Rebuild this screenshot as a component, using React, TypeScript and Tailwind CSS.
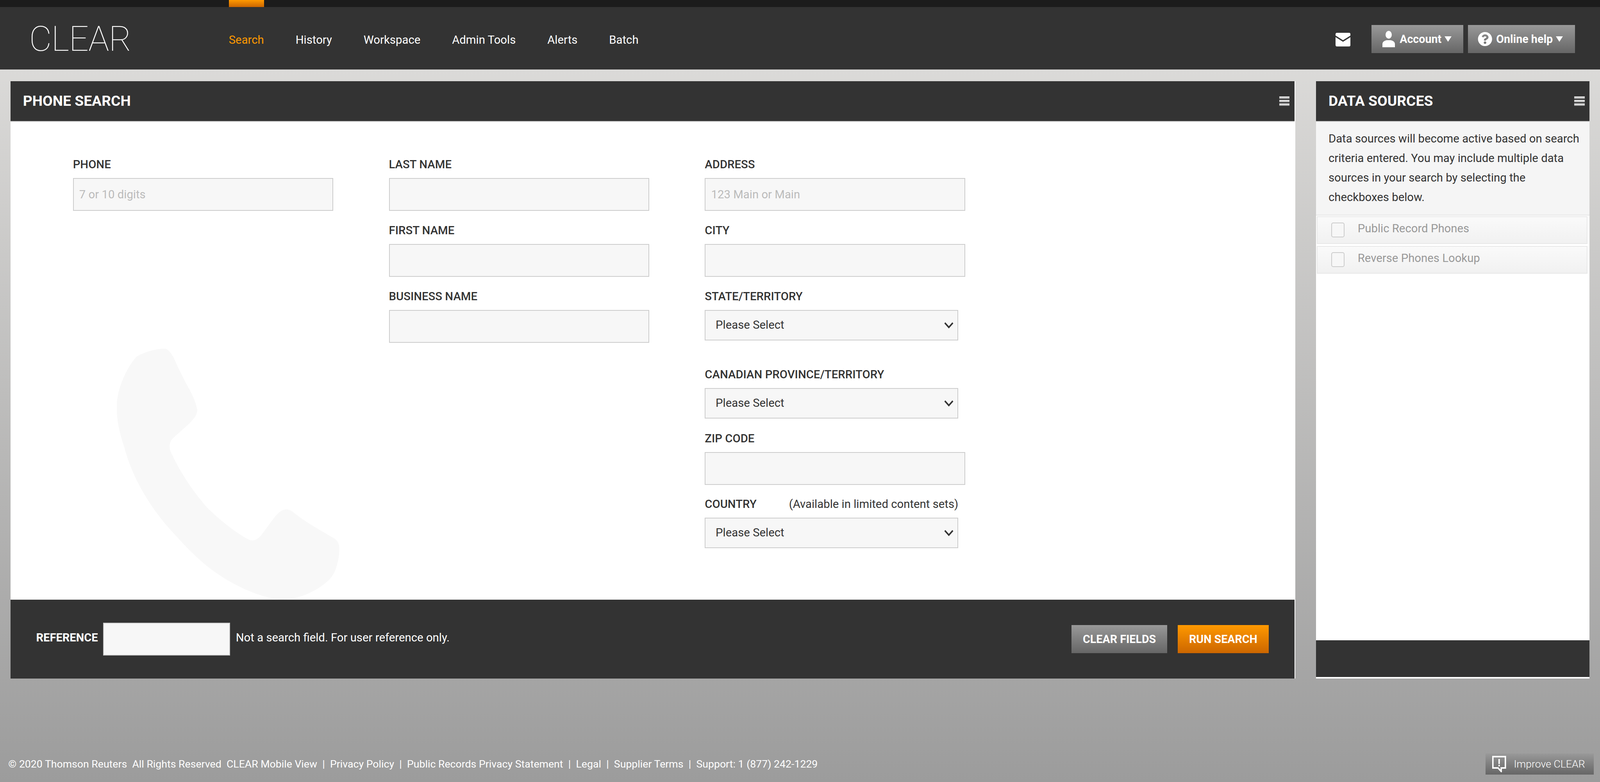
import { FaQuestionCircle } from "react-icons/fa";

// horizontal sizes are in vw so the page keeps its proportions at any window width
// (1vw = 46.08px at the 4608 design width), vertical sizes stay in px
const NAV = ["History", "Workspace", "Admin Tools", "Alerts", "Batch"];

function Hamburger() {
  return (
    <div className="flex w-[0.651vw] flex-col gap-[3px]">
      <span className="h-[6px] bg-linear-to-b from-white to-[#999]" />
      <span className="h-[6px] bg-linear-to-b from-white to-[#999]" />
      <span className="h-[6px] bg-linear-to-b from-white to-[#999]" />
    </div>
  );
}

function Caret() {
  return <span className="block h-0 w-0 border-x-[0.239vw] border-t-[14px] border-x-transparent border-t-white" />;
}

function TextField({ label, placeholder, className = "" }: { label: string; placeholder?: string; className?: string }) {
  return (
    <div className={className}>
      <label className="flex h-[68px] items-center text-[0.716vw] font-medium text-[#333]">{label}</label>
      <input
        placeholder={placeholder}
        className="block h-[84px] w-[16.276vw] border-2 border-[#ccc] bg-[#f7f7f7] px-[0.347vw] text-[0.716vw] outline-none placeholder:text-[#bbb]"
      />
    </div>
  );
}

function SelectField({ label, note, className = "" }: { label: string; note?: string; className?: string }) {
  return (
    <div className={className}>
      <label className="flex h-[68px] w-[15.842vw] items-center justify-between text-[0.716vw] font-medium text-[#333]">
        {label}
        {note && <span className="font-normal">{note}</span>}
      </label>
      <div className="relative h-[78px] w-[15.842vw]">
        <select className="block h-full w-full appearance-none border-2 border-[#ccc] bg-[#f7f7f7] pl-[0.629vw] text-[0.716vw] text-[#333] outline-none">
          <option>Please Select</option>
        </select>
        <svg viewBox="0 0 27 16" preserveAspectRatio="none" className="pointer-events-none absolute right-[0.304vw] top-[31px] h-[16px] w-[0.586vw]">
          <path d="M2 2l11.5 11.5L25 2" fill="none" stroke="#333" strokeWidth="4" />
        </svg>
      </div>
    </div>
  );
}

function SourceRow({ label }: { label: string }) {
  return (
    <label className="flex h-[71px] items-start border-2 border-[#e8e8e8] bg-linear-to-b from-[#fafafa] to-[#f1f1f1] pl-[0.868vw] text-[0.716vw] text-[#999]">
      <span className="mt-[14px] h-[38px] w-[0.825vw] rounded-[5px] border-2 border-[#ccc] bg-[#f7f7f7]" />
      <span className="ml-[0.825vw] mt-[8px] leading-[42px]">{label}</span>
    </label>
  );
}

export default function App() {
  return (
    <div className="flex min-h-[2003px] flex-col bg-linear-to-b from-[#e1e0de] to-[#9c9c9c] font-['Roboto',sans-serif]">
      <div className="h-[18px] bg-[#1c1c1c]">
        <div className="ml-[14.3vw] h-full w-[2.214vw] bg-linear-to-b from-[#f90] to-[#c60]" />
      </div>

      <header className="flex h-[160px] items-center bg-[#333] pr-[1.5625vw]">
        <div className="mt-[4px] w-[14.3vw] pl-[1.823vw] text-[2.17vw] font-thin leading-none tracking-[-0.02vw] text-white">CLEAR</div>
        <nav className="flex gap-[1.975vw] pt-[10px] text-[0.716vw] text-white">
          <a className="text-[#f90]">Search</a>
          {NAV.map((item) => (
            <a key={item}>{item}</a>
          ))}
        </nav>
        <svg viewBox="0 0 43 35" preserveAspectRatio="none" className="ml-auto mr-[1.324vw] mt-[7px] h-[35px] w-[0.933vw]">
          <path d="M4 0h35a4 4 0 0 1 4 4v3L21.500 19 0 7V4a4 4 0 0 1 4-4z" fill="#fff" />
          <path d="M0 11l21.500 12L43 11v20a4 4 0 0 1-4 4H4a4 4 0 0 1-4-4z" fill="#fff" />
        </svg>
        <button className="mt-[4px] flex h-[72px] w-[5.729vw] items-center bg-linear-to-b from-[#999] to-[#666] pl-[0.673vw] text-[0.7vw] font-bold text-white">
          <svg viewBox="0 0 36 42" preserveAspectRatio="none" className="mr-[0.304vw] h-[42px] w-[0.781vw]">
            <ellipse cx="18" cy="10" rx="9" ry="10" fill="#fff" />
            <path d="M0 42v-8c0-6 6-9 12-10h12c6 1 12 4 12 10v8z" fill="#fff" />
          </svg>
          Account
          <span className="ml-[0.2vw]"><Caret /></span>
        </button>
        <button className="ml-[0.304vw] mt-[4px] flex h-[72px] w-[6.684vw] items-center bg-linear-to-b from-[#999] to-[#666] pl-[0.608vw] text-[0.7vw] font-bold text-white">
          <FaQuestionCircle className="mr-[0.239vw] h-[42px] w-[0.911vw]" />
          Online help
          <span className="ml-[0.195vw]"><Caret /></span>
        </button>
      </header>

      <main className="mt-[30px] flex gap-[1.302vw] px-[0.651vw]">
        <section className="flex h-[1530px] flex-1 flex-col border-r-2 border-white">
          <div className="flex h-[104px] items-center justify-between border-b-2 border-[#ccc] bg-[#333] pl-[0.781vw] pr-[0.304vw]">
            <h1 className="text-[0.91vw] font-bold text-white">PHONE SEARCH</h1>
            <Hamburger />
          </div>
          <div className="relative flex-1 overflow-hidden bg-white pl-[3.906vw] pt-[76px]">
            <svg viewBox="0 0 1568 1568" preserveAspectRatio="none" className="absolute left-[5.425vw] top-[548px] h-[700px] w-[16.059vw]">
              <path
                fill="#f8f8f8"
                d="M420 75C450 90 470 130 490 175L540 270C570 320 600 370 610 425C610 460 580 485 560 505L465 585C440 605 435 640 450 670C520 810 600 910 670 985C750 1060 840 1125 915 1165C950 1185 975 1170 1000 1145L1075 1050C1110 1005 1150 975 1200 1015C1270 1070 1380 1125 1440 1160C1480 1180 1480 1210 1475 1260C1465 1320 1450 1370 1410 1405C1320 1480 1210 1515 1120 1512C1000 1505 850 1440 740 1370C620 1295 520 1190 420 1085C300 950 210 800 165 640C130 540 115 470 120 380C130 280 190 170 240 120C280 95 370 70 420 75Z"
              />
            </svg>
            <div className="relative flex gap-[3.472vw]">
              <div>
                <TextField label="PHONE" placeholder="7 or 10 digits" />
              </div>
              <div>
                <TextField label="LAST NAME" className="mb-[17px]" />
                <TextField label="FIRST NAME" className="mb-[17px]" />
                <TextField label="BUSINESS NAME" />
              </div>
              <div>
                <TextField label="ADDRESS" placeholder="123 Main or Main" className="mb-[17px]" />
                <TextField label="CITY" className="mb-[17px]" />
                <SelectField label="STATE/TERRITORY" className="mb-[54px]" />
                <SelectField label="CANADIAN PROVINCE/TERRITORY" className="mb-[18px]" />
                <TextField label="ZIP CODE" className="mb-[16px]" />
                <SelectField label="COUNTRY" note="(Available in limited content sets)" />
              </div>
            </div>
          </div>
          <div className="flex h-[202px] items-center bg-[#333] px-[1.606vw] text-[0.716vw] text-white">
            <span className="mb-[6px] mr-[0.33vw] text-[0.71vw] font-bold">REFERENCE</span>
            <input className="h-[84px] w-[7.943vw] border-2 border-[#ccc] bg-[#f7f7f7] outline-none" />
            <span className="mb-[6px] ml-[0.347vw]">Not a search field. For user reference only.</span>
            <button className="ml-auto h-[72px] w-[5.99vw] bg-linear-to-b from-[#999] to-[#666] text-[0.7vw] font-bold">CLEAR FIELDS</button>
            <button className="ml-[0.651vw] h-[72px] w-[5.686vw] bg-linear-to-b from-[#f90] to-[#c60] text-[0.7vw] font-bold">RUN SEARCH</button>
          </div>
        </section>

        <aside className="flex h-[1530px] w-[17.1vw] flex-col bg-white">
          <div className="flex h-[104px] shrink-0 items-center justify-between border-b-2 border-[#ccc] bg-[#333] pl-[0.781vw] pr-[0.304vw]">
            <h2 className="text-[0.91vw] font-bold text-white">DATA SOURCES</h2>
            <Hamburger />
          </div>
          <p className="h-[240px] border-b-2 border-[#e5e5e5] bg-[#f5f5f5] pl-[0.781vw] pr-[0.434vw] pt-[18px] text-[0.716vw] leading-[50px] text-[#333]">
            Data sources will become active based on search criteria entered. You may include multiple data sources in your search by selecting the checkboxes below.
          </p>
          <div className="flex flex-col gap-[5px] pl-[0.043vw] pr-[0.13vw] pt-[2px]">
            <SourceRow label="Public Record Phones" />
            <SourceRow label="Reverse Phones Lookup" />
          </div>
          <div className="mb-[4px] mt-auto h-[94px] bg-[#333]" />
        </aside>
      </main>

      <footer className="mt-auto flex items-center justify-between pb-[19px] pl-[0.521vw] pr-[0.391vw] text-[0.651vw] text-white">
        <p className="whitespace-pre">
          {"© 2020 Thomson Reuters  All Rights Reserved  CLEAR Mobile View  |  Privacy Policy  |  Public Records Privacy Statement  |  Legal  |  Supplier Terms  |  Support: 1 (877) 242-1229"}
        </p>
        <button className="flex h-[54px] w-[6.771vw] items-center bg-linear-to-b from-[#999] to-[#666] pl-[0.434vw] font-light">
          <svg viewBox="0 0 40 42" preserveAspectRatio="none" className="mr-[0.477vw] h-[42px] w-[0.868vw]">
            <path d="M2 2h36v29H26v9l-9-9H2z" fill="none" stroke="#fff" strokeWidth="4" />
            <path d="M18 8h4v13h-4zM18 23h4v4h-4z" fill="#fff" />
          </svg>
          Improve CLEAR
        </button>
      </footer>
    </div>
  );
}
